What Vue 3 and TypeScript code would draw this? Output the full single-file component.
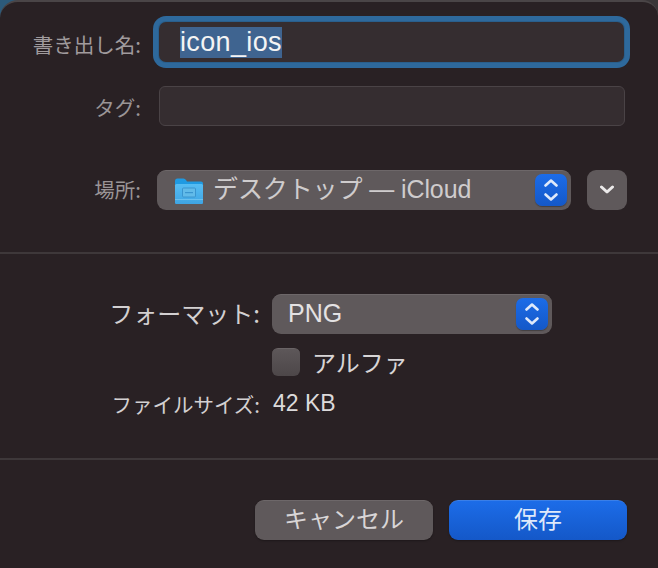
<script setup lang="ts">
const chevronUp = 'M3.5 6.5 L9 1.5 L14.5 6.5'
const chevronDown = 'M3.5 15.5 L9 20.5 L14.5 15.5'
</script>

<template>
  <div class="sheet">
    <section class="top">
      <div class="row name-row">
        <label class="label">書き出し名:</label>
        <div class="field focused"><span class="selected">icon_ios</span></div>
      </div>
      <div class="row tag-row">
        <label class="label">タグ:</label>
        <div class="field"></div>
      </div>
      <div class="row place-row">
        <label class="label place-label">場所:</label>
        <div class="popup place">
          <svg class="folder" width="30" height="28" viewBox="0 0 30 28">
            <defs>
              <linearGradient id="folderBody" x1="0" y1="0" x2="0" y2="1">
                <stop offset="0" stop-color="#57bdf3" />
                <stop offset="1" stop-color="#3fa5e3" />
              </linearGradient>
            </defs>
            <path d="M1 4 Q1 1.500 3.500 1.500 L9.500 1.500 Q11 1.500 12 3 L13 4.500 L27 4.500 Q29 4.500 29 6.500 L29 25 Q29 27 27 27 L3 27 Q1 27 1 25 Z" fill="#1f9ae2" />
            <rect x="1" y="7" width="28" height="20" rx="1.500" fill="url(#folderBody)" />
            <rect x="1" y="22" width="28" height="1" fill="#86d0f5" opacity="0.6" />
            <rect x="8.500" y="11" width="13" height="9" rx="1" fill="#62bbe9" stroke="#3a95cf" />
            <rect x="11" y="15" width="8" height="1.200" fill="#3a95cf" />
          </svg>
          <span class="popup-text">デスクトップ — iCloud</span>
          <span class="stepper">
            <svg width="18" height="22" viewBox="0 0 18 22">
              <path :d="chevronUp" />
              <path :d="chevronDown" />
            </svg>
          </span>
        </div>
        <button class="expand">
          <svg width="16" height="10" viewBox="0 0 16 10">
            <path d="M2.500 2 L8 7 L13.500 2" />
          </svg>
        </button>
      </div>
    </section>

    <section class="middle">
      <div class="row format-row">
        <label class="label bright">フォーマット:</label>
        <div class="popup format">
          <span class="popup-text png">PNG</span>
          <span class="stepper">
            <svg width="18" height="22" viewBox="0 0 18 22">
              <path :d="chevronUp" />
              <path :d="chevronDown" />
            </svg>
          </span>
        </div>
      </div>
      <div class="row alpha-row">
        <span class="checkbox"></span>
        <span class="alpha">アルファ</span>
      </div>
      <div class="row size-row">
        <span class="label bright small">ファイルサイズ:</span>
        <span class="size">42 KB</span>
      </div>
    </section>

    <footer class="actions">
      <button class="btn">キャンセル</button>
      <button class="btn primary">保存</button>
    </footer>
  </div>
</template>

<style scoped>
.sheet {
  width: 658px;
  height: 568px;
  box-sizing: border-box;
  background: #292124;
  font-family: "Noto Sans CJK JP", "Liberation Sans", sans-serif;
  display: flex;
  flex-direction: column;
  overflow: hidden;
  border-top: 2px solid #4a4547;
  border-top-left-radius: 18px;
  border-top-right-radius: 16px;
}

.top {
  height: 252px;
  box-sizing: border-box;
  padding: 20px 31px 0 0;
  border-bottom: 2px solid #3e383a;
  display: flex;
  flex-direction: column;
}

.row {
  display: flex;
  align-items: center;
}

.label {
  color: #9a9597;
  font-size: 20.500px;
  line-height: 24px;
  white-space: nowrap;
}

.name-row .label,
.tag-row .label,
.place-label {
  width: 141px;
  flex: none;
  text-align: right;
}

.name-row .label {
  color: #a09b9d;
  padding-top: 3px;
}

.tag-row .label {
  padding-top: 1px;
}

.place-label {
  padding-bottom: 3px;
}

.field {
  flex: 1;
  height: 40px;
  margin: 0 2px 0 18px;
  box-sizing: border-box;
  background: #352d30;
  border: 1px solid #4a4346;
  border-radius: 6px;
  display: flex;
  align-items: center;
  padding-left: 21px;
}

.field.focused {
  border: none;
  box-shadow: 0 0 0 1px #2a5f8c, 0 0 0 6px #2e699c;
  border-radius: 7px;
  margin-right: 3px;
}

.selected {
  background: #3f6490;
  color: #f4f4f4;
  font-family: "Liberation Sans", sans-serif;
  font-size: 27px;
  letter-spacing: 0.35px;
  line-height: 31px;
  height: 31px;
}

.tag-row {
  margin-top: 24px;
}

.place-row {
  margin-top: 44px;
}

.popup {
  flex: none;
  height: 40px;
  box-sizing: border-box;
  background: #5f595b;
  border-radius: 9px;
  border-top: 1px solid #6d6769;
  display: flex;
  align-items: center;
  position: relative;
  color: #d8d5d6;
}

.place {
  width: 414px;
  margin-left: 16px;
  padding-left: 17px;
}

.format {
  width: 280px;
  margin-left: 8px;
  padding-left: 16px;
}

.folder {
  flex: none;
  margin-right: 9px;
}

.popup-text {
  font-size: 25px;
  line-height: 32px;
  letter-spacing: -0.1px;
  padding-bottom: 4px;
  white-space: nowrap;
  font-family: "Liberation Sans", "Noto Sans CJK JP", sans-serif;
  color: #cfcccd;
}

.popup-text.png {
  letter-spacing: 0;
  color: #e4e2e3;
}

.stepper {
  position: absolute;
  right: 4px;
  top: 3px;
  width: 32px;
  height: 32px;
  border-radius: 7px;
  background: linear-gradient(#1c6ce8, #1458c8);
  box-shadow: 0 1px 1px rgba(0, 0, 0, 0.3);
  display: flex;
  align-items: center;
  justify-content: center;
}

.stepper path {
  fill: none;
  stroke: #dfe9fa;
  stroke-width: 2.600;
  stroke-linecap: round;
  stroke-linejoin: round;
}

.expand {
  flex: none;
  width: 40px;
  height: 40px;
  margin-left: 16px;
  padding: 0;
  border: none;
  border-radius: 9px;
  background: #5f595b;
  display: flex;
  align-items: center;
  justify-content: center;
}

.expand path {
  fill: none;
  stroke: #eceaea;
  stroke-width: 3;
  stroke-linecap: round;
  stroke-linejoin: round;
}

.middle {
  height: 206px;
  box-sizing: border-box;
  padding-top: 40px;
  border-bottom: 2px solid #3e383a;
  display: flex;
  flex-direction: column;
}

.format-row .label {
  width: 264px;
  padding: 0 4px 2px 0;
  box-sizing: border-box;
  text-align: right;
}

.size-row .label {
  width: 260px;
  text-align: right;
}

.bright {
  color: #d3d0d1;
  font-size: 24px;
}

.small {
  font-size: 20.500px;
}

.alpha-row {
  margin-top: 14px;
  padding-left: 272px;
}

.checkbox {
  width: 28px;
  height: 28px;
  box-sizing: border-box;
  border-radius: 6px;
  background: linear-gradient(#5d5759, #4d4749);
  border-top: 1px solid #6a6466;
}

.alpha {
  margin-left: 12px;
  font-size: 24px;
  line-height: 28px;
  color: #d8d5d6;
}

.size-row {
  margin-top: 14px;
}

.size {
  margin-left: 13px;
  font-family: "Liberation Sans", sans-serif;
  font-size: 23px;
  color: #dcdadb;
}

.actions {
  display: flex;
  justify-content: flex-end;
  gap: 16px;
  padding: 40px 31px 0 0;
}

.btn {
  width: 178px;
  height: 40px;
  border: none;
  border-top: 1px solid #6d6769;
  border-radius: 9px;
  background: #5f595b;
  color: #d8d5d6;
  font-family: "Noto Sans CJK JP", sans-serif;
  font-size: 24px;
  line-height: 1;
  padding: 0 0 5px;
  box-shadow: 0 1px 2px rgba(0, 0, 0, 0.3);
}

.btn.primary {
  background: linear-gradient(#1c6ce8, #1458c8);
  border-top: 1px solid #3a7fe8;
  color: #dfe9fa;
}
</style>

<style>
html {
  background: linear-gradient(90deg, #2c5a7a 50%, #3a3638 50%);
}
</style>
